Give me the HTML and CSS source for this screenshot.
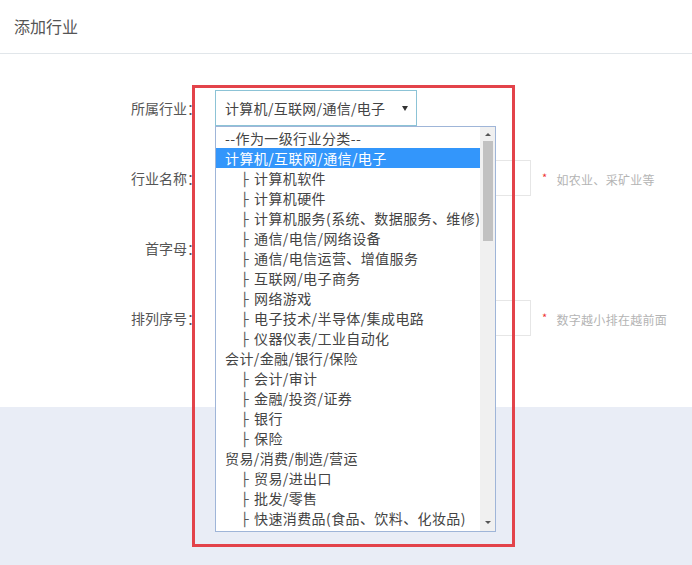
FILE: index.html
```html
<!DOCTYPE html>
<html lang="zh-CN">
<head>
<meta charset="UTF-8">
<meta name="viewport" content="width=device-width, initial-scale=1.0">
<title>添加行业</title>
<link rel="stylesheet" href="styles.css">
</head>
<body>
    <header class="page-head">
        <h2 class="page-title">添加行业</h2>
    </header>

    <main class="form-area">
        <form class="industry-form">
            <div class="form-row">
                <label class="form-label">所属行业：</label>
                <div class="select-wrap">
                    <div class="select-box">
                        <span>计算机/互联网/通信/电子</span>
                        <span class="select-arrow"></span>
                    </div>
                    <div class="option-list">
                        <ul class="options">
                            <li>--作为一级行业分类--</li>
                            <li class="selected">计算机/互联网/通信/电子</li>
                            <li class="child"><span class="tick">├</span>计算机软件</li>
                            <li class="child"><span class="tick">├</span>计算机硬件</li>
                            <li class="child"><span class="tick">├</span>计算机服务(系统、数据服务、维修)</li>
                            <li class="child"><span class="tick">├</span>通信/电信/网络设备</li>
                            <li class="child"><span class="tick">├</span>通信/电信运营、增值服务</li>
                            <li class="child"><span class="tick">├</span>互联网/电子商务</li>
                            <li class="child"><span class="tick">├</span>网络游戏</li>
                            <li class="child"><span class="tick">├</span>电子技术/半导体/集成电路</li>
                            <li class="child"><span class="tick">├</span>仪器仪表/工业自动化</li>
                            <li>会计/金融/银行/保险</li>
                            <li class="child"><span class="tick">├</span>会计/审计</li>
                            <li class="child"><span class="tick">├</span>金融/投资/证券</li>
                            <li class="child"><span class="tick">├</span>银行</li>
                            <li class="child"><span class="tick">├</span>保险</li>
                            <li>贸易/消费/制造/营运</li>
                            <li class="child"><span class="tick">├</span>贸易/进出口</li>
                            <li class="child"><span class="tick">├</span>批发/零售</li>
                            <li class="child"><span class="tick">├</span>快速消费品(食品、饮料、化妆品)</li>
                        </ul>
                        <div class="scrollbar">
                            <span class="scroll-up"></span>
                            <span class="scroll-thumb"></span>
                            <span class="scroll-down"></span>
                        </div>
                    </div>
                </div>
            </div>

            <div class="form-row">
                <label class="form-label">行业名称：</label>
                <input type="text" class="text-input">
                <span class="hint"><i>*</i>如农业、采矿业等</span>
            </div>

            <div class="form-row">
                <label class="form-label">首字母：</label>
                <input type="text" class="text-input short">
            </div>

            <div class="form-row">
                <label class="form-label">排列序号：</label>
                <input type="text" class="text-input">
                <span class="hint"><i>*</i>数字越小排在越前面</span>
            </div>
        </form>
    </main>

    <!-- annotation frame drawn over the open dropdown -->
    <div class="mark-frame"></div>
</body>
</html>
```

FILE: styles.css
```css
body {
    margin: 0;
    height: 565px;
    background-color: #e9edf6;
    font-family: "Noto Sans CJK SC", "Liberation Sans", sans-serif;
    color: #555;
    overflow: hidden;
}
.page-head {
    background-color: #fff;
    height: 53px;
    border-bottom: 1px solid #e1e6ea;
}
.page-title {
    margin: 0;
    padding-left: 14px;
    font-size: 16px;
    font-weight: normal;
    line-height: 52px;
    color: #555;
}
.form-area {
    background-color: #fff;
    padding: 36px 0 71px;
}
.industry-form {
    display: flex;
    flex-direction: column;
    gap: 34px;
}
.form-row {
    display: flex;
    align-items: center;
    height: 36px;
}
.form-label {
    width: 201px;
    margin-right: 14px;
    text-align: right;
    font-size: 14px;
    color: #555;
}
.select-wrap {
    position: relative;
}
.select-box {
    box-sizing: border-box;
    width: 202px;
    height: 36px;
    border: 1px solid #8cc3d6;
    display: flex;
    align-items: center;
    justify-content: space-between;
    padding: 0 8px 0 9px;
    font-size: 14px;
    letter-spacing: 0.3px;
    color: #444;
    background: #fff;
}
.select-arrow {
    width: 0;
    height: 0;
    border-left: 3px solid transparent;
    border-right: 3px solid transparent;
    border-top: 5px solid #333;
}
.option-list {
    position: absolute;
    top: 36px;
    left: 0;
    z-index: 5;
    box-sizing: border-box;
    width: 281px;
    height: 406px;
    border: 1px solid #9fb5d8;
    background: #fff;
    display: flex;
}
.options {
    list-style: none;
    margin: 0;
    padding: 1px 0 0;
    flex: 1;
    overflow: hidden;
}
.options li {
    height: 20px;
    line-height: 20px;
    padding-left: 9px;
    font-size: 14px;
    letter-spacing: 0.4px;
    color: #444;
    white-space: nowrap;
}
.options li.child {
    padding-left: 25px;
}
.options li.selected {
    background-color: #3396fb;
    color: #fff;
}
.tick {
    display: inline-block;
    width: 13px;
    font-family: "DejaVu Sans", sans-serif;
    font-size: 13px;
    font-weight: bold;
    color: #555;
}
.scrollbar {
    width: 15px;
    background-color: #f0f0f0;
    display: flex;
    flex-direction: column;
    align-items: center;
}
.scroll-up,
.scroll-down {
    width: 0;
    height: 0;
    border-left: 3px solid transparent;
    border-right: 3px solid transparent;
}
.scroll-up {
    margin-top: 6px;
    border-bottom: 3px solid #555;
}
.scroll-down {
    margin-top: auto;
    margin-bottom: 7px;
    border-top: 3px solid #555;
}
.scroll-thumb {
    width: 10px;
    height: 100px;
    margin-top: 5px;
    background-color: #c1c1c1;
}
.text-input {
    box-sizing: border-box;
    width: 316px;
    height: 36px;
    border: 1px solid #e6e6e6;
    outline: none;
}
.text-input.short {
    width: 202px;
}
.hint {
    margin-left: 11px;
    font-size: 12px;
    letter-spacing: 0.3px;
    color: #b4b4b4;
}
.hint i {
    font-style: normal;
    color: #e33;
    font-size: 11px;
    margin-right: 9px;
    vertical-align: 3px;
}
.mark-frame {
    position: absolute;
    left: 192px;
    top: 85px;
    width: 317px;
    height: 456px;
    border: 3px solid #e3434a;
    z-index: 10;
}
```
